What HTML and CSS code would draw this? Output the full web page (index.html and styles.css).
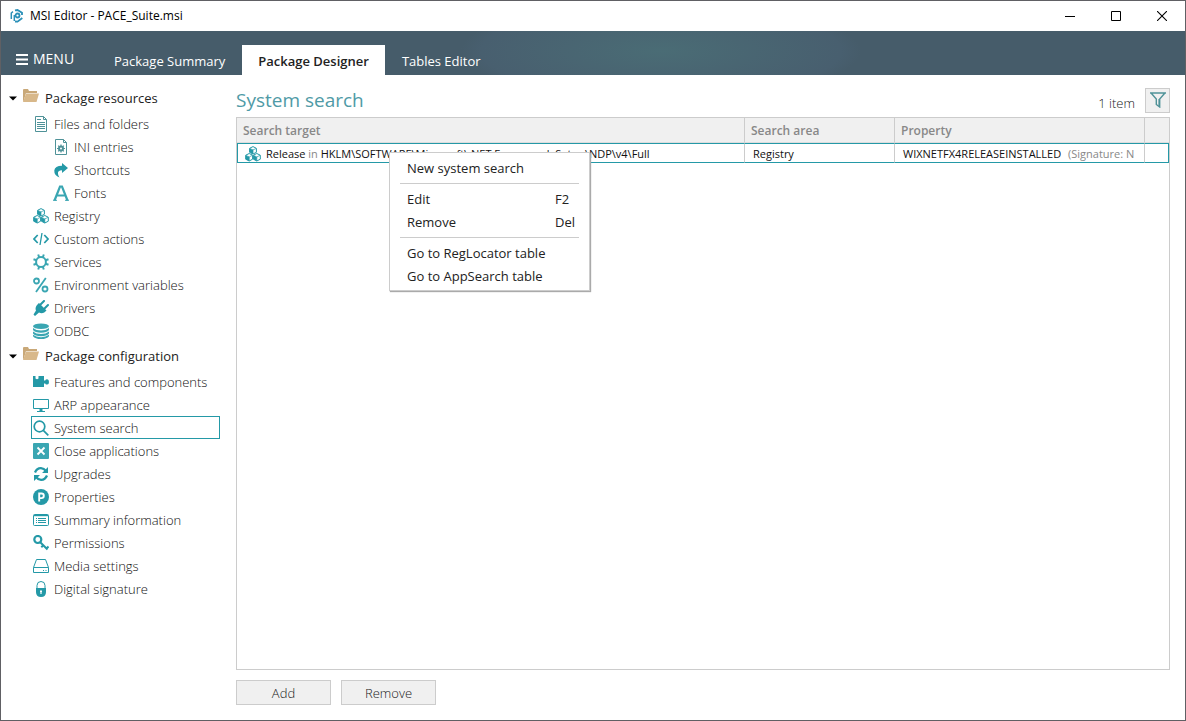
FILE: index.html
```html
<!DOCTYPE html>
<html lang="en">
<head>
<meta charset="utf-8">
<title>MSI Editor - PACE_Suite.msi</title>
<link rel="stylesheet" href="styles.css">
</head>
<body>
<svg class="defs" aria-hidden="true">
  <symbol id="cubes" viewBox="0 0 16 16">
    <path d="M8 .6l3.400 1.700v4L8 8 4.600 6.300v-4zM4.200 7.500l3.400 1.700v4l-3.400 1.800-3.500-1.800v-4zM11.800 7.500l3.500 1.700v4l-3.500 1.800-3.400-1.800v-4z" fill="#fff" stroke="#2499a7"/>
    <path d="M4.600 2.500L8 4v4L4.600 6.300zM.7 9.400l3.500 1.500V15L.7 13.200zM8.400 9.400l3.400 1.500V15l-3.400-1.800z" fill="#2499a7"/>
    <path d="M5 2.500l3 1.400 3-1.400M8 4v4M1 9.400l3.200 1.500 3.100-1.500M4.200 11v4M8.700 9.400l3.100 1.500L15 9.400M11.800 11v4" fill="none" stroke="#2499a7" stroke-width=".7"/>
  </symbol>
  <symbol id="folder" viewBox="0 0 16 14">
    <path d="M0 13V1q0-1 1-1h4l1 2h8v2H3L1 11z" fill="#c9a878"/>
    <path d="M3 4.500h13L13.500 13H0z" fill="#d8b88a"/>
  </symbol>
</svg>
<div class="window">
  <header class="titlebar">
    <svg class="logo" viewBox="0 0 14 14"><g fill="none" stroke="#2a90b8" stroke-width="1.800"><path d="M5 1.300L7.500 1 12 3.700V6M12.300 9L7.500 12.600 5 12.500"/><path d="M3 2.700L1.300 4v6" stroke-width="1.500"/><circle cx="7.500" cy="6.500" r="2"/><path d="M4.300 6v6" stroke-width="1.500"/></g></svg>
    <span class="caption">MSI Editor - PACE_Suite.msi</span>
    <button class="winbtn" aria-label="Minimize"><svg viewBox="0 0 10 10"><path d="M0 5.500h10" stroke="#000"/></svg></button>
    <button class="winbtn" aria-label="Maximize"><svg viewBox="0 0 10 10"><path d="M.5.5h9v9h-9z" fill="none" stroke="#000"/></svg></button>
    <button class="winbtn" aria-label="Close"><svg viewBox="0 0 10 10"><path d="M0 0l10 10M10 0L0 10" stroke="#000" stroke-width="1.100"/></svg></button>
  </header>
  <nav class="ribbon">
    <button class="menu-button"><svg viewBox="0 0 12 11"><path d="M0 1h12M0 5.500h12M0 10h12" stroke="#fff" stroke-width="2"/></svg>MENU</button>
    <button class="tab">Package Summary</button>
    <button class="tab active">Package Designer</button>
    <button class="tab">Tables Editor</button>
  </nav>
  <div class="body">
    <nav class="tree">
      <div class="group"><svg class="arrow" viewBox="0 0 8 5"><path d="M0 .5h8L4 4.500z"/></svg><svg class="folder"><use href="#folder"/></svg>Package resources</div>
      <a class="item" href="#files"><svg viewBox="0 0 16 16" fill="none" stroke="#4f9298"><path d="M2.500.5h8l3 3v12h-11zM10.500.5v3h3M4 3.500h4M4 6.500h8M4 8.500h8M4 10.500h8M4 12.500h8"/></svg>Files and folders</a>
      <a class="item sub" href="#ini"><svg viewBox="0 0 16 16" fill="none" stroke="#4f9298"><path d="M2.500.5h8l3 3v12h-11zM10.500.5v3h3"/><circle cx="8" cy="9.500" r="2" stroke-width="2"/><path d="M8 5.500v2M8 11.500v2M4 9.500h2M10 9.500h2M5.200 6.700l1.400 1.400M9.400 10.900l1.400 1.400M10.800 6.700L9.400 8.100M6.600 10.900l-1.400 1.400" stroke-width="1.200"/></svg>INI entries</a>
      <a class="item sub" href="#shortcuts"><svg viewBox="0 0 16 16"><path d="M9 1l6 5-6 5V8.300C6 8.300 4.600 9.500 5 12q.3 1.800 1.500 3.500Q1 13.500 1.300 8.500 1.800 3.700 9 3.700z" fill="#2499a7"/></svg>Shortcuts</a>
      <a class="item sub" href="#fonts"><svg viewBox="0 0 16 16" fill="none" stroke="#3aa6b2" stroke-width="2.200"><path d="M1.500 15.500L7 1.500h2l5.500 14M4 10.500h8"/><path d="M0 15.300h4M12 15.300h4" stroke-width="1"/></svg>Fonts</a>
      <a class="item" href="#registry"><svg><use href="#cubes"/></svg>Registry</a>
      <a class="item" href="#actions"><svg viewBox="0 0 16 16" fill="none" stroke="#2499a7" stroke-width="1.700"><path d="M4.700 4L1 8l3.700 4M11.300 4L15 8l-3.700 4"/><path d="M9 2L7 14" stroke-width="1.300"/></svg>Custom actions</a>
      <a class="item" href="#services"><svg viewBox="0 0 16 16" fill="none" stroke="#3aa6b2"><circle cx="8" cy="8" r="4.900" stroke-width="2"/><path d="M5.200.500l1 3M10.800.500l-1 3M5.200 15.500l1-3M10.800 15.500l-1-3M.5 5.200l3 1M.5 10.800l3-1M15.500 5.200l-3 1M15.500 10.800l-3-1" stroke-width="2"/></svg>Services</a>
      <a class="item" href="#env"><svg viewBox="0 0 16 16" fill="none" stroke="#3aa6b2" stroke-width="1.800"><circle cx="3.500" cy="4" r="2.500"/><circle cx="12" cy="12" r="2.500"/><path d="M12.800 1L3 15" stroke-width="1.800"/></svg>Environment variables</a>
      <a class="item" href="#drivers"><svg viewBox="0 0 16 16"><path d="M6 3l7.500 7.500c-2 2.300-4.500 3.500-7.500 2L2 16l-1.500-1.500L3 10.500C1.800 8 3.500 5 6 3z" fill="#2499a7"/><path d="M7.500 4.500L11 1M11.500 8.500L15 5" stroke="#2499a7" stroke-width="2" stroke-linecap="round"/></svg>Drivers</a>
      <a class="item" href="#odbc"><svg viewBox="0 0 16 16" fill="#3aa6b2"><ellipse cx="8" cy="3.200" rx="8" ry="2.800"/><path d="M0 5q3 2.500 8 2.500T16 5v2q-2 2.700-8 2.700T0 7zM0 8.500Q3 11 8 11t8-2.500v2q-2 2.700-8 2.700t-8-2.700zM0 11.800q3 2.400 8 2.400t8-2.400v1.400Q14 16 8 16t-8-2.800z"/></svg>ODBC</a>
      <div class="group"><svg class="arrow" viewBox="0 0 8 5"><path d="M0 .5h8L4 4.500z"/></svg><svg class="folder"><use href="#folder"/></svg>Package configuration</div>
      <a class="item" href="#features"><svg viewBox="0 0 16 16"><path d="M0 2h2.500v2.500Q4 6 5.500 4.500V2H11v4.500h1.200q.4-1.200 2-1.200Q16 5.500 16 8t-1.800 2.600q-1.600 0-2-1.200H11V13H0z" fill="#2499a7"/></svg>Features and components</a>
      <a class="item" href="#arp"><svg viewBox="0 0 16 16"><path d="M.5 2.500h15v9H.500z" fill="none" stroke="#2499a7"/><path d="M6.500 12h3v2H12v1H4v-1h2.500z" fill="#2499a7"/></svg>ARP appearance</a>
      <a class="item selected" href="#search"><svg viewBox="0 0 16 16" fill="none" stroke="#2499a7" stroke-width="1.700"><circle cx="6.500" cy="6.500" r="5.300"/><path d="M10.300 10.300L15.300 15.300"/></svg>System search</a>
      <a class="item" href="#close"><svg viewBox="0 0 16 16"><rect width="16" height="16" rx="1" fill="#3aa6b2"/><path d="M4.500 4.500l7 7M11.500 4.500l-7 7" stroke="#fff" stroke-width="1.800"/></svg>Close applications</a>
      <a class="item" href="#upgrades"><svg viewBox="0 0 16 16" fill="none" stroke="#2499a7" stroke-width="2.300"><path d="M2 6.500Q4 2 8 2.200q3 .2 5 2.800M14 9.500q-2 4.500-6 4.300-3-.2-5-2.800"/><path d="M15 1v6H9zM1 15V9h6z" fill="#2499a7" stroke="none"/></svg>Upgrades</a>
      <a class="item" href="#properties"><svg viewBox="0 0 16 16"><circle cx="8" cy="8" r="8" fill="#2499a7"/><path d="M6.200 12.500V4.500h2.300a2.300 2.300 0 010 4.600H6.200" fill="none" stroke="#fff" stroke-width="1.900"/></svg>Properties</a>
      <a class="item" href="#summary"><svg viewBox="0 0 16 16" fill="none" stroke="#2499a7"><rect x=".5" y="2.500" width="15" height="11" rx="1"/><path d="M1 3.500h14" stroke-width="1.400"/><path d="M5 6.500h8M5 8.500h8M5 10.500h8M3 6.500h1M3 8.500h1M3 10.500h1"/></svg>Summary information</a>
      <a class="item" href="#permissions"><svg viewBox="0 0 16 16" fill="none" stroke="#2499a7" stroke-width="2"><circle cx="4.800" cy="4.500" r="3.500" stroke-width="2.200"/><path d="M7 7l7.500 7.500M10 10.500L8.300 12.200M13.500 13.500l2-2"/></svg>Permissions</a>
      <a class="item" href="#media"><svg viewBox="0 0 16 16" fill="none" stroke="#2499a7"><path d="M.5 9.500L3.500 1.500h9l3 8v5H.500zM.5 9.500h15M10 12.500h1M12.500 12.500h1"/></svg>Media settings</a>
      <a class="item" href="#signature"><svg viewBox="0 0 16 16"><path d="M4 8V4.500q0-4 4-4t4 4V8" fill="none" stroke="#2499a7"/><path d="M3 7h10v4q0 5-5 5t-5-5z" fill="#2499a7"/><path d="M7 9.500h2V11H8.600v2H7.400v-2H7z" fill="#fff"/></svg>Digital signature</a>
    </nav>
    <main class="content">
      <div class="heading">
        <h1>System search</h1>
        <span class="count">1 item</span>
        <button class="filter" aria-label="Filter"><svg viewBox="0 0 16 16" fill="none" stroke="#4f9298" stroke-width="1.400"><path d="M0 1h16M1.500 1.500L6.300 7v5.500L9.700 15V7l4.800-5.500"/><path d="M9.200 7v7" stroke-width="1.600"/></svg></button>
      </div>
      <div class="grid">
        <table>
          <colgroup><col><col class="area"><col class="prop"><col class="tail"></colgroup>
          <thead><tr><th>Search target</th><th>Search area</th><th>Property</th><th></th></tr></thead>
          <tbody><tr>
            <td><div class="target"><svg><use href="#cubes"/></svg><span>Release <i>in</i> HKLM\SOFTWARE\Microsoft\.NET Framework Setup\NDP\v4\Full</span></div></td>
            <td>Registry</td>
            <td>WIXNETFX4RELEASEINSTALLED <i class="sig">(Signature: N</i></td>
            <td></td>
          </tr></tbody>
        </table>
        <div class="context" role="menu">
          <button role="menuitem">New system search</button>
          <hr>
          <button role="menuitem">Edit<kbd>F2</kbd></button>
          <button role="menuitem">Remove<kbd>Del</kbd></button>
          <hr>
          <button role="menuitem">Go to RegLocator table</button>
          <button role="menuitem">Go to AppSearch table</button>
        </div>
      </div>
      <div class="actions"><button>Add</button><button>Remove</button></div>
    </main>
  </div>
</div>
</body>
</html>
```
FILE: styles.css
```css
* { box-sizing: border-box; }
body { margin: 0; font: 13px/20px "Open Sans", "Noto Sans", sans-serif; color: #222; background: #fff; }
button { font: inherit; color: inherit; background: none; border: 0; padding: 0; margin: 0; }
svg { display: block; flex: none; }
.defs { position: absolute; width: 0; height: 0; }
.window { display: flex; flex-direction: column; height: 100vh; border: 1px solid #606064; }
.titlebar { display: flex; align-items: center; height: 30px; padding-left: 9px; font-size: 12px; color: #000; }
.logo { width: 14px; height: 14px; }
.caption { flex: 1; padding-left: 6px; }
.winbtn { width: 46px; height: 29px; display: grid; place-items: center; }
.winbtn svg { width: 10px; height: 10px; }
.ribbon { display: flex; align-items: flex-end; height: 44px; color: #fff; background: radial-gradient(ellipse 200px 50px at 660px 20px, #4a6c75, #485f6f 90%, #465c6a); }
.menu-button { display: flex; align-items: center; gap: 5px; width: 96px; height: 32px; padding-left: 15px; font-size: 14px; }
.menu-button svg { width: 12px; height: 11px; }
.tab { height: 30px; padding: 2px 17px 0; }
.tab.active { padding: 2px 16px 0; background: #fff; color: #222; font-weight: 600; }
.body { display: flex; flex: 1; min-height: 0; }
.tree { width: 235px; padding: 9px 16px 0 8px; }
.group { display: flex; align-items: center; height: 28px; color: #222; }
.arrow { width: 8px; height: 5px; margin-right: 6px; }
.folder { width: 16px; height: 14px; margin: 0 6px 4px 0; }
.item { display: flex; align-items: center; gap: 5px; height: 23px; margin-left: 22px; padding-left: 1px; border: 1px solid transparent; color: #111; font-weight: 300; text-decoration: none; }
.item svg { width: 16px; height: 16px; }
.item.sub { padding-left: 21px; }
.item.selected { border-color: #2499a7; }
.content { flex: 1; display: flex; flex-direction: column; min-width: 0; padding: 0 15px 15px 0; }
.heading { display: flex; align-items: center; height: 42px; padding-top: 8px; }
h1 { flex: 1; margin: 0; font: 400 19px/26px "Open Sans", "Noto Sans", sans-serif; color: #4f9aa6; }
.count { padding: 6px 10px 0 0; font-weight: 300; }
.filter { width: 25px; height: 25px; border: 1px solid #ccc; background: #f0f0f0; display: grid; place-items: center; }
.filter svg { width: 16px; height: 16px; }
.grid { position: relative; flex: 1; border: 1px solid #ccc; }
table { width: 100%; table-layout: fixed; border-collapse: separate; border-spacing: 0; }
.area { width: 150px; }
.prop { width: 250px; }
.tail { width: 24px; }
th { height: 25px; padding: 2px 6px 0; text-align: left; font-size: 12px; font-weight: 600; color: #888; background: #f0f0f0; border-right: 1px solid #ccc; border-bottom: 1px solid #ddd; }
th:last-child { border-right: 0; }
td { height: 20px; padding: 2px 2px 0 8px; font-size: 11px; line-height: 16px; border: solid #2499a7; border-width: 1px 0; border-right: 1px solid #ccc; overflow: hidden; white-space: nowrap; color: #111; }
td:first-child { border-left: 1px solid #2499a7; padding-left: 7px; }
td:last-child { border-right-color: #2499a7; padding: 0; }
td i { font-style: normal; color: #888; }
.sig { padding-left: 4px; }
.target { display: flex; align-items: center; gap: 5px; height: 16px; }
.target svg { width: 16px; height: 16px; }
.context { position: absolute; left: 152px; top: 34px; width: 201px; padding: 3px 10px; background: #fff; border: 1px solid #ccc; box-shadow: 1px 1px 1px #aaa; }
.context button { display: flex; justify-content: space-between; align-items: center; width: 100%; height: 23px; padding: 0 4px 0 7px; }
.context kbd { width: 20px; font: inherit; text-align: left; }
.context hr { height: 1px; border: 0; margin: 4px 0 3px; background: #ccc; }
.actions { display: flex; gap: 10px; padding-top: 10px; }
.actions button { width: 95px; height: 25px; border: 1px solid #ccc; background: #f0f0f0; font-weight: 300; }
```
